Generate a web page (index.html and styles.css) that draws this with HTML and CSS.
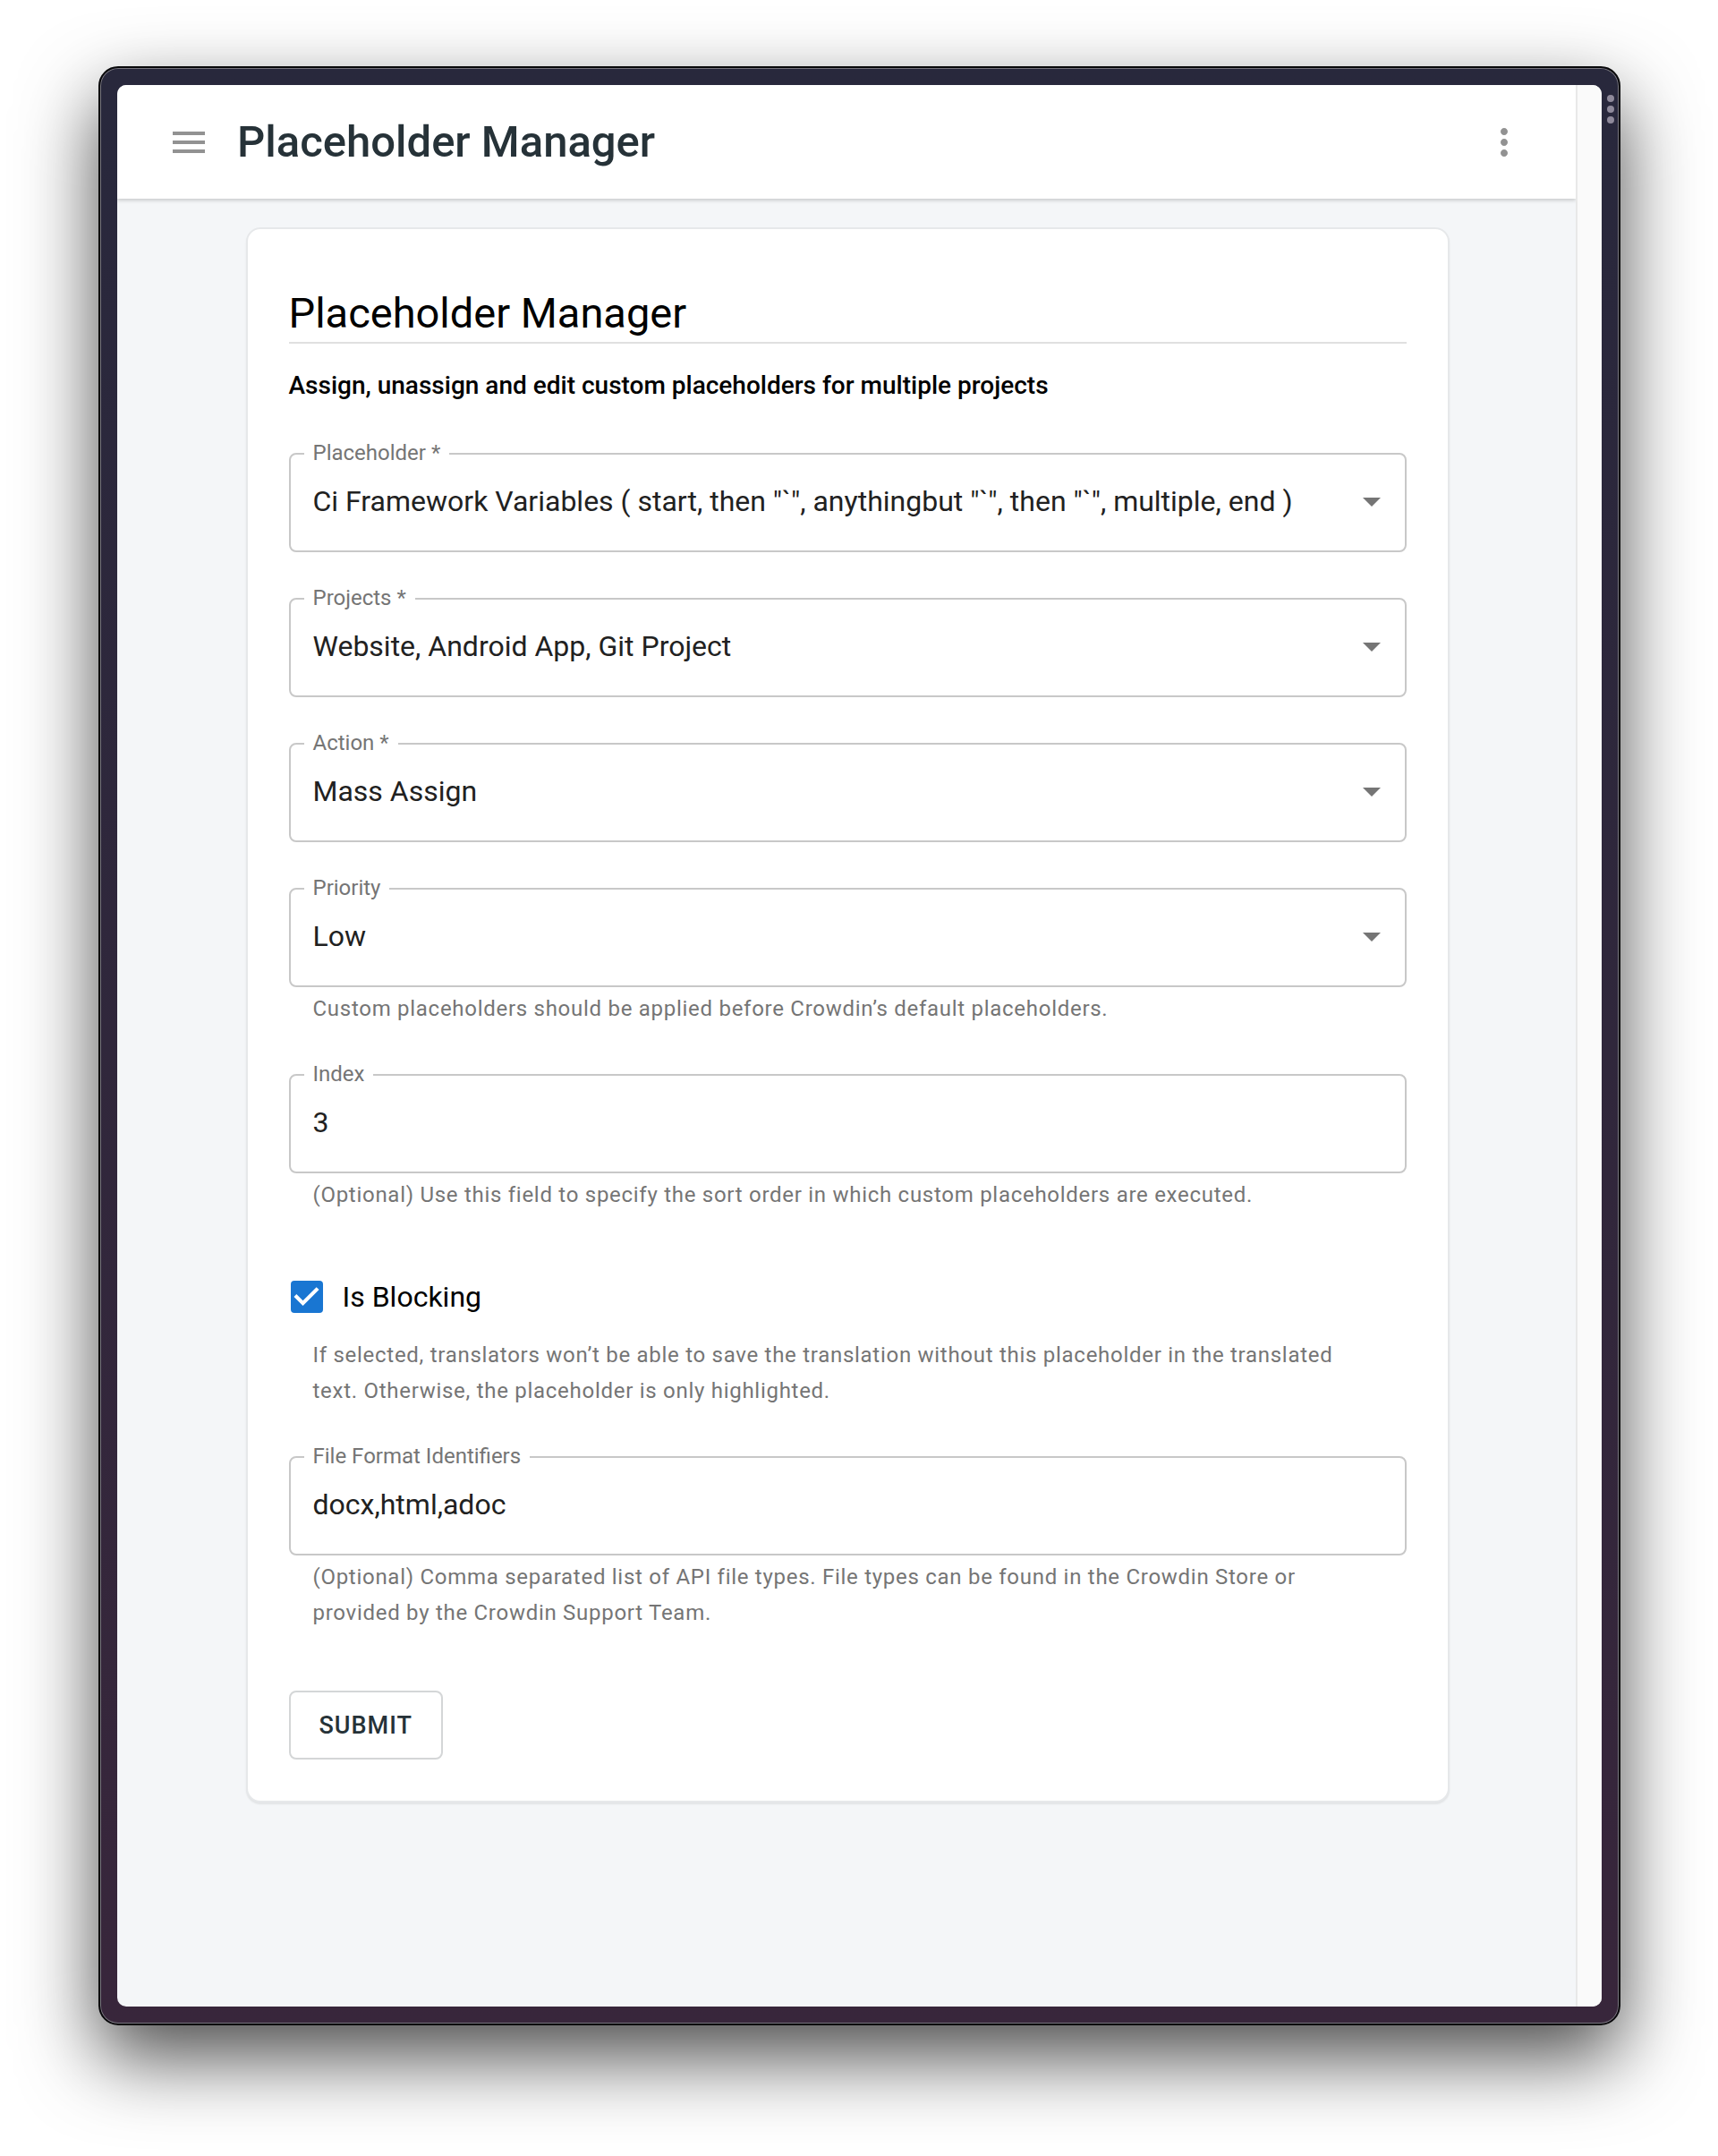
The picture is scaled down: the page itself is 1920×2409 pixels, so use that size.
FILE: index.html
```html
<!DOCTYPE html>
<html lang="en">
<head>
    <meta charset="UTF-8">
    <meta name="viewport" content="width=device-width, initial-scale=1.0">
    <title>Placeholder Manager</title>
    <link rel="stylesheet" href="styles.css">
</head>
<body>

    <div class="window">
        <svg class="window-menu" viewBox="0 0 8 32" aria-hidden="true">
            <circle cx="4" cy="4" r="4"/><circle cx="4" cy="16" r="4"/><circle cx="4" cy="28" r="4"/>
        </svg>

        <div class="screen">
            <div class="page">
                <header class="app-bar">
                    <button type="button" class="icon-button" aria-label="Open menu">
                        <svg viewBox="0 0 24 24"><path d="M3 18h18v-2H3v2zm0-5h18v-2H3v2zm0-7v2h18V6H3z"/></svg>
                    </button>
                    <h1>Placeholder Manager</h1>
                    <button type="button" class="icon-button" aria-label="More options">
                        <svg viewBox="0 0 24 24"><path d="M12 8c1.1 0 2-.9 2-2s-.9-2-2-2-2 .9-2 2 .9 2 2 2zm0 2c-1.1 0-2 .9-2 2s.9 2 2 2 2-.9 2-2-.9-2-2-2zm0 6c-1.1 0-2 .9-2 2s.9 2 2 2 2-.9 2-2-.9-2-2-2z"/></svg>
                    </button>
                </header>

                <main>
                    <form class="card">
                        <h2>Placeholder Manager</h2>
                        <p class="subtitle">Assign, unassign and edit custom placeholders for multiple projects</p>

                        <div class="fields">
                            <div>
                                <fieldset>
                                    <legend><label for="placeholder">Placeholder *</label></legend>
                                    <select id="placeholder">
                                        <option>Ci Framework Variables ( start, then "`", anythingbut "`", then "`", multiple, end )</option>
                                    </select>
                                    <svg class="arrow" viewBox="0 0 24 24"><path d="M7 10l5 5 5-5z"/></svg>
                                </fieldset>
                            </div>

                            <div>
                                <fieldset>
                                    <legend><label for="projects">Projects *</label></legend>
                                    <select id="projects">
                                        <option>Website, Android App, Git Project</option>
                                    </select>
                                    <svg class="arrow" viewBox="0 0 24 24"><path d="M7 10l5 5 5-5z"/></svg>
                                </fieldset>
                            </div>

                            <div>
                                <fieldset>
                                    <legend><label for="action">Action *</label></legend>
                                    <select id="action">
                                        <option>Mass Assign</option>
                                    </select>
                                    <svg class="arrow" viewBox="0 0 24 24"><path d="M7 10l5 5 5-5z"/></svg>
                                </fieldset>
                            </div>

                            <div>
                                <fieldset>
                                    <legend><label for="priority">Priority</label></legend>
                                    <select id="priority">
                                        <option>Low</option>
                                    </select>
                                    <svg class="arrow" viewBox="0 0 24 24"><path d="M7 10l5 5 5-5z"/></svg>
                                </fieldset>
                                <p class="helper">Custom placeholders should be applied before Crowdin’s default placeholders.</p>
                            </div>

                            <div>
                                <fieldset>
                                    <legend><label for="index">Index</label></legend>
                                    <input type="text" id="index" value="3">
                                </fieldset>
                                <p class="helper">(Optional) Use this field to specify the sort order in which custom placeholders are executed.</p>
                            </div>

                            <div>
                                <div class="check-row">
                                    <input type="checkbox" id="blocking" checked>
                                    <label for="blocking">Is Blocking</label>
                                </div>
                                <p class="helper">If selected, translators won’t be able to save the translation without this placeholder in the translated text. Otherwise, the placeholder is only highlighted.</p>
                            </div>

                            <div>
                                <fieldset>
                                    <legend><label for="formats">File Format Identifiers</label></legend>
                                    <input type="text" id="formats" value="docx,html,adoc">
                                </fieldset>
                                <p class="helper">(Optional) Comma separated list of API file types. File types can be found in the Crowdin Store or provided by the Crowdin Support Team.</p>
                            </div>
                        </div>

                        <button type="submit" class="submit">SUBMIT</button>
                    </form>
                </main>
            </div>
            <div class="scroll-track"></div>
        </div>
    </div>

</body>
</html>
```
FILE: styles.css
```css
* {
    box-sizing: border-box;
}
body {
    margin: 0;
    min-height: 100vh;
    padding: 74px 109px 146px 110px;
    display: flex;
    background: white;
    font-family: Roboto, sans-serif;
    color: black;
}
h1, h2, p {
    margin: 0;
}

/* Window frame */
.window {
    position: relative;
    flex: 1;
    display: flex;
    padding: 19px;
    border: 2px solid #08080a;
    border-radius: 22px;
    background: linear-gradient(to bottom, #28283c, #38263b);
    box-shadow: inset 0 0 0 1px #77757d, 0 36px 86px rgba(0, 0, 0, 0.7);
}
.window-menu {
    position: absolute;
    top: 30px;
    right: 5px;
    width: 8px;
    height: 32px;
    fill: #8f8a9b;
}
.screen {
    flex: 1;
    display: flex;
    border-radius: 10px;
    overflow: hidden;
    background: #f4f6f8;
}
.page {
    flex: 1;
    min-width: 0;
}
.scroll-track {
    width: 29px;
    border-left: 2px solid #e8e8e8;
    background: #fafafa;
}

/* Top bar */
.app-bar {
    display: flex;
    align-items: center;
    height: 127px;
    padding: 0 56px;
    background: white;
    box-shadow: 0 2px 4px rgba(0, 0, 0, 0.18);
}
.app-bar h1 {
    flex: 1;
    margin-left: 30px;
    font-size: 49px;
    font-weight: 500;
    line-height: 56px;
    color: #263238;
}
.icon-button {
    width: 48px;
    height: 48px;
    padding: 0;
    border: 0;
    background: none;
}
.icon-button svg {
    display: block;
    fill: #929292;
}

/* Form card */
main {
    padding: 32px 40px 32px 42px;
}
.card {
    max-width: 1345px;
    margin: 0 auto;
    padding: 66px 46px 46px;
    border: 2px solid #e6e8ea;
    border-radius: 16px;
    background: white;
    box-shadow: 0 2px 2px rgba(0, 0, 0, 0.08);
}
.card h2 {
    padding-bottom: 4px;
    border-bottom: 2px solid #e0e0e0;
    font-size: 47px;
    font-weight: 400;
    line-height: 56px;
}
.subtitle {
    margin: 27px 0 42px;
    font-size: 28px;
    font-weight: 500;
    line-height: 40px;
}
.fields {
    display: flex;
    flex-direction: column;
    gap: 38px;
}
fieldset {
    position: relative;
    min-width: 0;
    margin: 0;
    padding: 0;
    border: 2px solid #c8c8c8;
    border-radius: 8px;
}
legend {
    margin-left: 15px;
    padding: 0 10px 2px;
    font-size: 24px;
    line-height: 26px;
    color: #757575;
}
legend label {
    display: block;
}
select, input[type="text"] {
    display: block;
    appearance: none;
    width: 100%;
    height: 94px;
    margin: 0;
    padding: 0 64px 16px 25px;
    border: 0;
    background: none;
    font-family: inherit;
    font-size: 32px;
    color: #212121;
}
.arrow {
    position: absolute;
    top: 15px;
    right: 13px;
    width: 48px;
    height: 48px;
    fill: #757575;
    pointer-events: none;
}
.helper {
    margin: 4px 27px 2px;
    font-size: 24px;
    line-height: 40px;
    letter-spacing: 0.03em;
    color: #757575;
}

/* Checkbox */
.check-row {
    display: flex;
    align-items: center;
    gap: 22px;
    height: 82px;
    margin-top: 13px;
    padding-left: 2px;
    font-size: 32px;
}
.check-row input {
    appearance: none;
    width: 36px;
    height: 36px;
    margin: 0;
    border-radius: 4px;
    border: 4px solid #757575;
}
.check-row input:checked {
    border: 0;
    background: #1976d2;
}
.check-row input:checked::before {
    content: "";
    display: block;
    height: 100%;
    background: white;
    clip-path: polygon(39% 78%, 11% 50%, 19% 42%, 39% 62%, 81% 20%, 89% 28%);
}

.submit {
    display: block;
    height: 77px;
    margin-top: 65px;
    padding: 0 32px;
    border: 2px solid #d4d6d7;
    border-radius: 8px;
    background: white;
    font-family: inherit;
    font-size: 27px;
    font-weight: 500;
    letter-spacing: 1px;
    color: #263238;
}
```
